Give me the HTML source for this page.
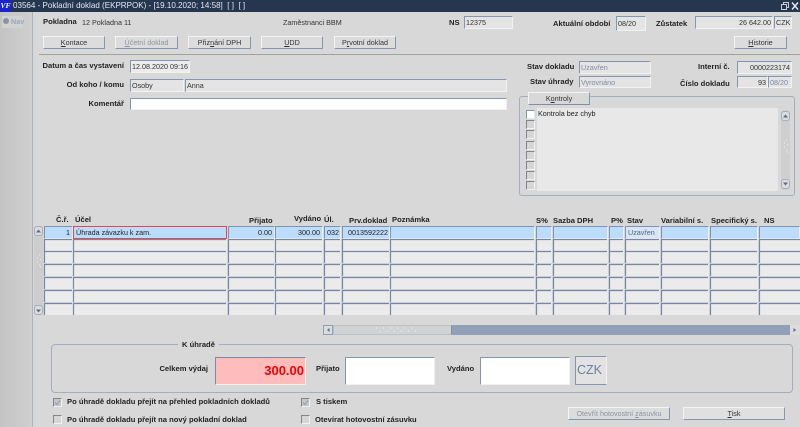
<!DOCTYPE html>
<html lang="cs"><head><meta charset="utf-8"><title>Pokladní doklad</title>
<style>
html,body{margin:0;padding:0}
#p{position:relative;width:800px;height:427px;overflow:hidden;background:#d8d8d8;font-family:"Liberation Sans",sans-serif;font-size:7.2px;color:#222;filter:blur(.3px)}
#p div{position:absolute;box-sizing:border-box;white-space:nowrap}
.l{font-weight:bold;font-size:7.6px;line-height:11px;height:11px;color:#222}
.r{text-align:right}
.f{background:#e4e4e4;border:1px solid;border-color:#8496b0 #f2f2f2 #f2f2f2 #8496b0;line-height:11px;padding:0 1px;overflow:hidden;color:#333}
.w{background:#fff}
.b{background:#dcdcdc;border:1px solid;border-color:#f4f4f4 #8496b0 #8496b0 #f4f4f4;text-align:center;line-height:11px;color:#333}
.d{color:#8a94a5}
.gd{color:#7d8ba3}
.c{background:#ebebeb;border:1px solid;border-color:#8092ad #f0f0f0 #f4f4f4 #8092ad;height:13px;line-height:11px;padding:0 2px;overflow:hidden}
.s{background:#bcdcfb}
.k{width:9px;height:9px;background:#d6d6d6;border:1px solid;border-color:#858585 #f2f2f2 #f2f2f2 #858585}
u{text-decoration:underline}
</style></head><body><div id="p">

<div style="left:0;top:0;width:800px;height:12px;background:#25364f"></div>
<div style="left:0;top:0;width:11px;height:12px;background:#1a22d0;color:#fff;font:italic bold 7.5px/12px 'Liberation Serif',serif;text-align:center">VF</div>
<div style="left:13px;top:0;height:12px;line-height:12px;font-size:8.05px;color:#e6e9ee">03564 - Pokladní doklad (EKPRPOK) - [19.10.2020; 14:58]&nbsp; [ ]&nbsp; [ ]</div>
<svg style="position:absolute;left:779px;top:1px" width="20" height="10"><path d="M2.5 3.5h5v5h-5zM4.5 3.5v-2h5v5h-2" fill="none" stroke="#c8ced8"/><path d="M13 1.5l6 7M19 1.5l-6 7" stroke="#e8ebf0" stroke-width="1.4"/></svg>

<div style="left:0;top:12px;width:32px;height:415px;background:linear-gradient(90deg,#c4c4c4,#cfcfcf)"></div>
<div style="left:32px;top:12px;width:1px;height:415px;background:#a8b3c4"></div>
<div style="left:2px;top:16px;width:21px;height:12px;background:#d2d2d2"></div>
<div style="left:3px;top:18px;width:6px;height:6px;border-radius:50%;background:#8a949f"></div>
<div style="left:11px;top:16px;line-height:12px;font-size:7.2px;font-weight:bold;color:#9aa6b8">Nav</div>

<div class="l" style="left:43px;top:16px">Pokladna</div>
<div style="left:82px;top:17px;line-height:11px;color:#333">12 Pokladna 11</div>
<div style="left:283px;top:17px;line-height:11px;color:#333">Zaměstnanci BBM</div>
<div class="l" style="left:449px;top:17px">NS</div>
<div class="f" style="left:464px;top:16px;width:49px;height:13px">12375</div>
<div class="l" style="left:553px;top:18px">Aktuální období</div>
<div class="f" style="left:616px;top:16px;width:30px;height:15px;line-height:13px">08/20</div>
<div class="l" style="left:656px;top:18px">Zůstatek</div>
<div class="f r" style="left:695px;top:16px;width:78px;height:13px">26 642.00</div>
<div class="f" style="left:774px;top:16px;width:18px;height:13px">CZK</div>

<div class="b" style="left:43px;top:36px;width:62px;height:13px"><u>K</u>ontace</div>
<div class="b d" style="left:115px;top:36px;width:63px;height:13px"><u>Ú</u>četní doklad</div>
<div class="b" style="left:188px;top:36px;width:63px;height:13px">Přiz<u>n</u>ání DPH</div>
<div class="b" style="left:261px;top:36px;width:62px;height:13px"><u>U</u>DD</div>
<div class="b" style="left:334px;top:36px;width:62px;height:13px">P<u>r</u>votní doklad</div>
<div class="b" style="left:734px;top:36px;width:53px;height:13px"><u>H</u>istorie</div>
<div style="left:39px;top:54px;width:761px;height:1px;background:#a2a2a2"></div>

<div class="l r" style="left:40px;top:60px;width:84px">Datum a čas vystavení</div>
<div class="f" style="left:130px;top:60px;width:60px;height:13px;background:#ececec">12.08.2020 09:16</div>
<div class="l r" style="left:40px;top:79px;width:84px">Od koho / komu</div>
<div class="f" style="left:130px;top:79px;width:54px;height:13px">Osoby</div>
<div class="f" style="left:185px;top:79px;width:322px;height:13px">Anna</div>
<div class="l r" style="left:40px;top:98px;width:84px">Komentář</div>
<div class="f w" style="left:130px;top:98px;width:377px;height:12px"></div>

<div class="l" style="left:527px;top:61px">Stav dokladu</div>
<div class="f gd" style="left:579px;top:61px;width:72px;height:13px">Uzavřen</div>
<div class="l" style="left:530px;top:76px">Stav úhrady</div>
<div class="f gd" style="left:579px;top:76px;width:72px;height:12px">Vyrovnáno</div>
<div class="l" style="left:698px;top:61px">Interní č.</div>
<div class="f r" style="left:737px;top:61px;width:55px;height:13px">0000223174</div>
<div class="l" style="left:680px;top:78px">Číslo dokladu</div>
<div class="f r" style="left:737px;top:76px;width:31px;height:12px">93</div>
<div class="f gd" style="left:768px;top:76px;width:24px;height:12px">08/20</div>

<div style="left:519px;top:96px;width:276px;height:100px;border:1px solid #a4aebd;border-radius:3px"></div>
<div class="b" style="left:528px;top:92px;width:62px;height:13px;background:#d8d8d8;border-bottom-color:#7d8ea8">K<u>o</u>ntroly</div>
<div style="left:537px;top:108px;width:241px;height:83px;background:#e8e8e8"></div>
<div style="left:538px;top:108px;line-height:12px;color:#222">Kontrola bez chyb</div>
<div class="k" style="left:526px;top:110px;background:#fff;border-color:#8496b0 #e0e8f4 #e0e8f4 #8496b0"></div>
<div class="k" style="left:526px;top:120px"></div>
<div class="k" style="left:526px;top:130px"></div>
<div class="k" style="left:526px;top:141px"></div>
<div class="k" style="left:526px;top:151px"></div>
<div class="k" style="left:526px;top:161px"></div>
<div class="k" style="left:526px;top:171px"></div>
<div class="k" style="left:526px;top:181px"></div>
<div style="left:781px;top:110px;width:9px;height:80px;background:#cfcfcf;border-radius:3px"></div>
<div style="left:781px;top:111px;width:9px;height:10px;background:#dcdcdc;border:1px solid #a4aebd;border-radius:3px"></div>
<div style="left:781px;top:179px;width:9px;height:10px;background:#dcdcdc;border:1px solid #a4aebd;border-radius:3px"></div>
<svg style="position:absolute;left:781px;top:111px" width="9" height="78"><path d="M2 6.500h5L4.500 3.500zM2 71.500h5L4.500 74.500z" fill="#5c6b82"/><path d="M5 29h1M3 32h1M6 34h1M3 36h1M5 39h1M6 41h1" stroke="#f4f4f4"/></svg>

<div class="l" style="left:56px;top:214px">Č.ř.</div>
<div class="l" style="left:75px;top:214px">Účel</div>
<div class="l" style="left:249px;top:215px">Přijato</div>
<div class="l" style="left:294px;top:213px">Vydáno</div>
<div class="l" style="left:324px;top:214px">Úl.</div>
<div class="l" style="left:349px;top:215px">Prv.doklad</div>
<div class="l" style="left:392px;top:214px">Poznámka</div>
<div class="l" style="left:536px;top:215px">S%</div>
<div class="l" style="left:553px;top:215px">Sazba DPH</div>
<div class="l" style="left:611px;top:215px">P%</div>
<div class="l" style="left:627px;top:215px">Stav</div>
<div class="l" style="left:661px;top:215px">Variabilní s.</div>
<div class="l" style="left:711px;top:215px">Specifický s.</div>
<div class="l" style="left:764px;top:215px">NS</div>

<!-- row scrollbar -->
<div style="left:34px;top:226px;width:9px;height:84px;background:#cdcdcd;border-radius:3px"></div>
<div style="left:34px;top:226px;width:9px;height:10px;background:#dcdcdc;border:1px solid #a4aebd;border-radius:3px"></div>
<div style="left:34px;top:305px;width:9px;height:10px;background:#dcdcdc;border:1px solid #a4aebd;border-radius:3px"></div>
<svg style="position:absolute;left:34px;top:226px" width="9" height="90"><path d="M2 6.500h5L4.500 3.500zM2 83.500h5L4.500 86.500z" fill="#5c6b82"/><path d="M5 29h1M3 32h1M6 34h1M3 36h1M5 39h1M6 41h1" stroke="#f4f4f4"/></svg>

<!-- grid: row 1 -->
<div class="c s r" style="left:44px;top:226px;width:29px;height:13px">1</div>
<div class="c s" style="left:73px;top:226px;width:154px;height:13px;border:1px solid #ef4444;padding-left:2px">Úhrada závazku k zam.</div>
<div class="c s r" style="left:228px;top:226px;width:47px">0.00</div>
<div class="c s r" style="left:275px;top:226px;width:48px">300.00</div>
<div class="c s" style="left:324px;top:226px;width:17px">032</div>
<div class="c s" style="left:342px;top:226px;width:48px;padding-left:5px">0013592222</div>
<div class="c s" style="left:390px;top:226px;width:145px"></div>
<div class="c s" style="left:536px;top:226px;width:16px"></div>
<div class="c s" style="left:553px;top:226px;width:55px"></div>
<div class="c s" style="left:609px;top:226px;width:15px"></div>
<div class="c" style="left:625px;top:226px;width:35px;background:#d6e6f6;color:#55657e">Uzavřen</div>
<div class="c s" style="left:661px;top:226px;width:48px"></div>
<div class="c s" style="left:710px;top:226px;width:48px"></div>
<div class="c s" style="left:759px;top:226px;width:41px"></div>

<!-- rows 2-7 -->
<svg style="position:absolute;left:0;top:0" width="800" height="427">
<defs><g id="rw" fill="#ebebeb" stroke="none">
<path d="M44 0h29v12h-29zM73 0h154v12h-154zM228 0h47v12h-47zM275 0h48v12h-48zM324 0h17v12h-17zM342 0h48v12h-48zM390 0h145v12h-145zM536 0h16v12h-16zM553 0h55v12h-55zM609 0h15v12h-15zM625 0h35v12h-35zM661 0h48v12h-48zM710 0h48v12h-48zM759 0h41v12h-41z"/>
<path d="M44.500 12V.5H72M73.500 12V.5H226M228.500 12V.5H274M275.500 12V.5H322M324.500 12V.5H340M342.500 12V.5H389M390.500 12V.5H534M536.500 12V.5H551M553.500 12V.5H607M609.500 12V.5H623M625.500 12V.5H659M661.500 12V.5H708M710.500 12V.5H757M759.500 12V.5H800" fill="none" stroke="#7488a6" stroke-width="1.200"/>
</g></defs>
<use href="#rw" y="239"/><use href="#rw" y="251"/><use href="#rw" y="264"/><use href="#rw" y="277"/><use href="#rw" y="290"/><use href="#rw" y="303"/>
</svg>

<!-- horizontal scrollbar -->
<div style="left:323px;top:325px;width:477px;height:10px;background:#8fa0b8"></div>
<div style="left:323px;top:325px;width:10px;height:10px;background:#dcdcdc;border:1px solid #8fa0b8"></div>
<div style="left:333px;top:325px;width:119px;height:10px;background:#d2d2d2;border:1px solid #b6c0ce;border-right:1px solid #7e90aa"></div>
<div style="left:790px;top:325px;width:10px;height:10px;background:#dcdcdc"></div>
<svg style="position:absolute;left:323px;top:325px" width="477" height="10"><path d="M6.500 3v4L4 5zM470.500 3v4L473 5z" fill="#5c6b82"/><path d="M53 3h1M60 3h1M67 3h1M74 3h1M81 3h1M88 3h1M57 6h1M64 6h1M71 6h1M78 6h1M85 6h1M92 6h1" stroke="#f4f4f4"/></svg>

<!-- K uhrade -->
<div style="left:51px;top:344px;width:742px;height:49px;border:1px solid #a4aebd;border-radius:4px"></div>
<div class="l" style="left:178px;top:339px;padding:0 4px;background:#d8d8d8">K úhradě</div>
<div class="l r" style="left:140px;top:363px;width:68px">Celkem výdaj</div>
<div class="f r" style="left:215px;top:357px;width:91px;height:28px;background:#ffbcbc;color:#f40000;font-size:13px;font-weight:bold;line-height:26px;border-color:#7b8ba5 #f0f0f0 #f0f0f0 #7b8ba5">300.00</div>
<div class="l" style="left:316px;top:363px">Přijato</div>
<div class="f w" style="left:345px;top:357px;width:90px;height:28px"></div>
<div class="l" style="left:447px;top:363px">Vydáno</div>
<div class="f w" style="left:480px;top:357px;width:90px;height:28px"></div>
<div class="f" style="left:575px;top:356px;width:32px;height:29px;background:#e2e2e2;color:#6b7f9f;font-size:12.5px;line-height:27px;border-color:#8496b0 #f2f2f2 #8496b0 #8496b0">CZK</div>

<div class="k" style="left:53px;top:398px;background:#c6c6c6"></div>
<svg style="position:absolute;left:53px;top:398px" width="9" height="9"><path d="M2 4.500l2 2 3-4" fill="none" stroke="#9aa5b5" stroke-width="1.300"/></svg>
<div class="l" style="left:67px;top:396px">Po úhradě dokladu přejít na přehled pokladních dokladů</div>
<div class="k" style="left:53px;top:415px"></div>
<div class="l" style="left:67px;top:414px">Po úhradě dokladu přejít na nový pokladní doklad</div>
<div class="k" style="left:301px;top:398px;background:#c6c6c6"></div>
<svg style="position:absolute;left:301px;top:398px" width="9" height="9"><path d="M2 4.500l2 2 3-4" fill="none" stroke="#9aa5b5" stroke-width="1.300"/></svg>
<div class="l" style="left:316px;top:396px">S tiskem</div>
<div class="k" style="left:301px;top:415px"></div>
<div class="l" style="left:315px;top:414px">Otevírat hotovostní zásuvku</div>

<div class="b d" style="left:568px;top:407px;width:102px;height:13px;line-height:11px">Otevřít hotovostní <u>z</u>ásuvku</div>
<div class="b" style="left:683px;top:407px;width:102px;height:13px;line-height:11px;background:#e0e0e0"><u>T</u>isk</div>

</div></body></html>
